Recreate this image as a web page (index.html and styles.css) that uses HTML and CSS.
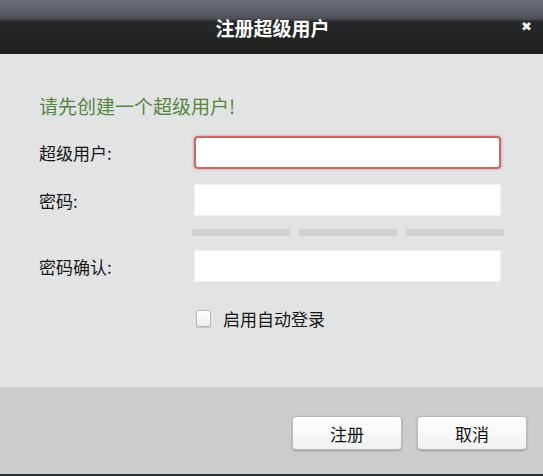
FILE: index.html
```html
<!DOCTYPE html>
<html lang="zh-CN">
  <head>
    <meta charset="UTF-8" />
    <meta name="viewport" content="width=device-width, initial-scale=1.0" />
    <title>注册超级用户</title>
    <link rel="stylesheet" href="styles.css">
  </head>
  <body>
    <div class="dialog">
      <div class="titlebar">
        <span class="title">注册超级用户</span>
        <span class="close">&#x2716;</span>
      </div>
      <div class="main">
        <p class="notice">请先创建一个超级用户!</p>
        <div class="row first">
          <label for="username">超级用户:</label>
          <input type="text" id="username" class="field error" />
        </div>
        <div class="row second">
          <label for="password">密码:</label>
          <input type="password" id="password" class="field" />
        </div>
        <div class="strength">
          <span></span>
          <span></span>
          <span></span>
        </div>
        <div class="row third">
          <label for="confirm">密码确认:</label>
          <input type="password" id="confirm" class="field" />
        </div>
        <div class="auto-login">
          <span class="checkbox"></span>
          <span>启用自动登录</span>
        </div>
      </div>
      <div class="footer">
        <button type="button">注册</button>
        <button type="button">取消</button>
      </div>
    </div>
  </body>
</html>
```

FILE: styles.css
```css
body {
  font-family: "Noto Sans CJK SC", "DejaVu Sans", sans-serif;
  margin: 0;
  padding: 0;
  background-color: #e2e3e4;
}

.dialog {
  width: 543px;
  height: 476px;
  display: flex;
  flex-direction: column;
}

.titlebar {
  height: 54px;
  flex: none;
  display: flex;
  align-items: center;
  justify-content: center;
  position: relative;
  background: linear-gradient(#6c7077 0%, #4e5157 34%, #28292b 40%, #1e1f1c 100%);
}

.title {
  color: #fff;
  font-size: 19px;
  font-weight: bold;
  margin-left: 2px;
}

.close {
  position: absolute;
  right: 11px;
  top: 19px;
  color: #f2f2f2;
  font-size: 13px;
  font-weight: bold;
  font-family: "DejaVu Sans", sans-serif;
}

.main {
  flex: 1;
  padding: 40px 0 0 39px;
  background-color: #e2e3e4;
}

.notice {
  margin: 0 0 18px 0;
  line-height: 24px;
  font-size: 19px;
  color: #55853f;
}

.row {
  display: flex;
  align-items: center;
}

.row label {
  width: 155px;
  font-size: 17px;
  color: #161616;
}

.field {
  width: 307px;
  height: 32px;
  box-sizing: border-box;
  border: 1px solid #f2f2f2;
  background-color: #fff;
  border-radius: 1px;
  margin: 0;
  padding: 0 6px;
}

.field.error {
  height: 33px;
  border: 2px solid #c56a6a;
  border-radius: 4px;
  box-shadow: 0 0 2px 1px rgba(220, 120, 120, 0.45);
}

.second {
  margin-top: 15px;
}

.strength {
  display: flex;
  gap: 9px;
  margin: 13px 0 0 153px;
}

.strength span {
  width: 98px;
  height: 7px;
  background-color: #cfd0d1;
  border-radius: 1px;
}

.third {
  margin-top: 14px;
}

.auto-login {
  display: flex;
  align-items: center;
  margin: 26px 0 0 157px;
  height: 20px;
  font-size: 17px;
  color: #161616;
}

.checkbox {
  width: 13px;
  height: 15px;
  border: 1px solid #b4b5b6;
  border-radius: 2px;
  background: linear-gradient(#ffffff, #ececec);
  box-shadow: 0 1px 1px rgba(0, 0, 0, 0.15);
  margin-right: 12px;
}

.footer {
  height: 89px;
  flex: none;
  box-sizing: border-box;
  display: flex;
  justify-content: flex-end;
  gap: 15px;
  padding: 29px 16px 0 0;
  background-color: #cbcccd;
  border-bottom: 2px solid #2c2f32;
}

.footer button {
  width: 110px;
  height: 34px;
  font-family: inherit;
  font-size: 17px;
  color: #111;
  border: 1px solid #b9babb;
  border-radius: 4px;
  background: linear-gradient(#ffffff, #f1f1f1);
  box-shadow: 0 1px 2px rgba(0, 0, 0, 0.25);
  padding: 0;
}
```
